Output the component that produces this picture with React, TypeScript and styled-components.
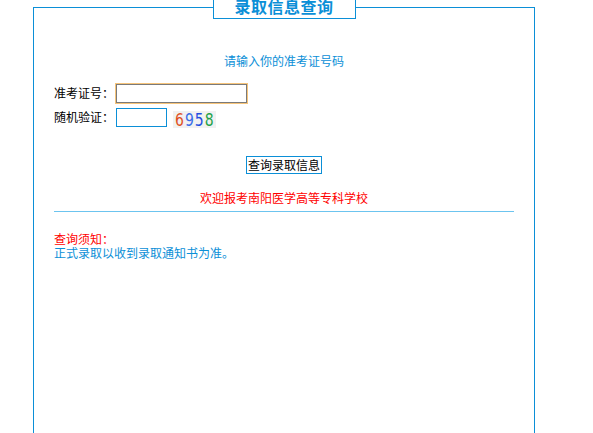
import React from "react";
import styled, { createGlobalStyle } from "styled-components";

const BLUE = "#0b8fd7";

const CAPTCHA = [
  { digit: "6", color: "#e0501e" },
  { digit: "9", color: "#3a6ee8" },
  { digit: "5", color: "#1f4fe0" },
  { digit: "8", color: "#1ea24a" },
];

const GlobalStyle = createGlobalStyle`
  body {
    margin: 0;
    background: #fff;
    font-family: "Noto Sans CJK SC", "Liberation Sans", sans-serif;
    font-size: 12px;
    line-height: 14px;
    overflow: hidden;
  }
`;

const Page = styled.div`
  height: 433px;
  padding-top: 7px;
  box-sizing: border-box;
`;

const Panel = styled.div`
  margin-left: 33px;
  width: 502px;
  height: 440px;
  border: 1px solid ${BLUE};
  border-bottom: none;
  display: flex;
  flex-direction: column;
  padding: 0 20px;
  box-sizing: border-box;
`;

const Legend = styled.div`
  align-self: center;
  margin-top: -9px;
  width: 143px;
  height: 20px;
  box-sizing: border-box;
  background: #fff;
  border: 1px solid ${BLUE};
  border-top: none;
  color: ${BLUE};
  font-size: 16px;
  font-weight: bold;
  line-height: 15px;
  text-align: center;
  letter-spacing: 0.5px;
`;

const Note = styled.div<{ $color: string; $center?: boolean; $top: number }>`
  color: ${(p) => p.$color};
  text-align: ${(p) => (p.$center ? "center" : "left")};
  margin-top: ${(p) => p.$top}px;
  height: 14px;
  line-height: 14px;
`;

const FormRow = styled.div<{ $top: number }>`
  display: flex;
  align-items: center;
  height: 20px;
  margin-top: ${(p) => p.$top}px;
`;

const Label = styled.span`
  width: 62px;
  color: #000;
`;

const TextInput = styled.input<{ $focused?: boolean }>`
  box-sizing: border-box;
  height: 19px;
  padding: 0 2px;
  font-size: 12px;
  outline: none;
  border: 1px solid ${(p) => (p.$focused ? "#7a7a7a" : BLUE)};
  box-shadow: ${(p) => (p.$focused ? "0 0 0 1px #f6c47a" : "none")};
`;

const Captcha = styled.span`
  display: inline-flex;
  align-items: center;
  gap: 1px;
  margin-left: 6px;
  margin-top: 5px;
  padding: 0 2px;
  height: 17px;
  background: #f1f1f1;
  font-family: "DejaVu Sans", sans-serif;
  font-size: 14px;
`;

const Digit = styled.span<{ $color: string }>`
  color: ${(p) => p.$color};
  transform: scaleY(1.2);
`;

const ButtonRow = styled.div`
  display: flex;
  justify-content: center;
  margin-top: 29px;
`;

const QueryButton = styled.button`
  width: 76px;
  height: 18px;
  padding: 0;
  background: #fff;
  border: 1px solid ${BLUE};
  color: #000;
  font-family: "Noto Sans CJK SC", sans-serif;
  font-size: 12px;
  line-height: 14px;
`;

const Rule = styled.div`
  margin-top: 6px;
  height: 1px;
  background: #6cc4ef;
`;

const App: React.FC = () => (
  <Page>
    <GlobalStyle />
    <Panel>
      <Legend>录取信息查询</Legend>
      <Note $color={BLUE} $center $top={35}>
        请输入你的准考证号码
      </Note>
      <FormRow $top={15}>
        <Label>准考证号：</Label>
        <TextInput $focused style={{ width: 131 }} />
      </FormRow>
      <FormRow $top={4}>
        <Label>随机验证：</Label>
        <TextInput style={{ width: 51 }} />
        <Captcha>
          {CAPTCHA.map((c) => (
            <Digit key={c.digit} $color={c.color}>
              {c.digit}
            </Digit>
          ))}
        </Captcha>
      </FormRow>
      <ButtonRow>
        <QueryButton>查询录取信息</QueryButton>
      </ButtonRow>
      <Note $color="#ff0000" $center $top={17}>
        欢迎报考南阳医学高等专科学校
      </Note>
      <Rule />
      <Note $color="#ff0000" $top={20}>
        查询须知：
      </Note>
      <Note $color={BLUE} $top={0}>
        正式录取以收到录取通知书为准。
      </Note>
    </Panel>
  </Page>
);

export default App;
